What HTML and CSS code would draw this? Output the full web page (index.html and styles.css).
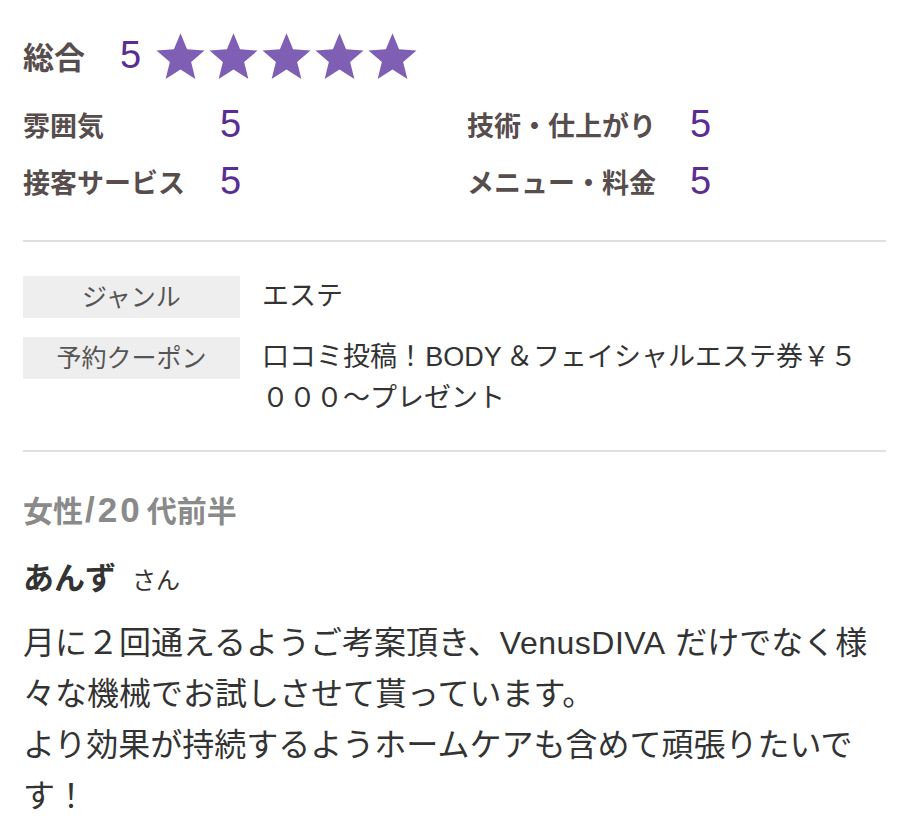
FILE: index.html
```html
<!DOCTYPE html>
<html lang="ja">
<head>
<meta charset="utf-8">
<link rel="stylesheet" href="styles.css">
</head>
<body>
<div class="page">
  <section class="rating">
    <div class="total">
      <span class="total-label">総合</span>
      <span class="total-num">5</span>
      <span class="stars">
        <svg class="star" viewBox="0 0 24 24"><path d="M12 1.5l3.1 7.6 8.2.6-6.3 5.3 2 8-7-4.4-7 4.4 2-8L.7 9.7l8.2-.6z"/></svg>
        <svg class="star" viewBox="0 0 24 24"><path d="M12 1.5l3.1 7.6 8.2.6-6.3 5.3 2 8-7-4.4-7 4.4 2-8L.7 9.7l8.2-.6z"/></svg>
        <svg class="star" viewBox="0 0 24 24"><path d="M12 1.5l3.1 7.6 8.2.6-6.3 5.3 2 8-7-4.4-7 4.4 2-8L.7 9.7l8.2-.6z"/></svg>
        <svg class="star" viewBox="0 0 24 24"><path d="M12 1.5l3.1 7.6 8.2.6-6.3 5.3 2 8-7-4.4-7 4.4 2-8L.7 9.7l8.2-.6z"/></svg>
        <svg class="star" viewBox="0 0 24 24"><path d="M12 1.5l3.1 7.6 8.2.6-6.3 5.3 2 8-7-4.4-7 4.4 2-8L.7 9.7l8.2-.6z"/></svg>
      </span>
    </div>
    <div class="sub-grid">
      <div class="sub"><span class="sub-label l1">雰囲気</span><span class="sub-num">5</span></div>
      <div class="sub"><span class="sub-label l2">技術・仕上がり</span><span class="sub-num">5</span></div>
      <div class="sub"><span class="sub-label l1">接客サービス</span><span class="sub-num">5</span></div>
      <div class="sub"><span class="sub-label l2">メニュー・料金</span><span class="sub-num">5</span></div>
    </div>
  </section>
  <hr class="divider">
  <section class="info">
    <div class="info-row">
      <div class="info-label">ジャンル</div>
      <div class="info-value">エステ</div>
    </div>
    <div class="info-row">
      <div class="info-label">予約クーポン</div>
      <div class="info-value">口コミ投稿！<span class="latin">BODY</span>＆フェイシャルエステ券￥５０００～プレゼント</div>
    </div>
  </section>
  <hr class="divider">
  <section class="review">
    <div class="reviewer-meta">女性<span class="meta-num">/20</span>代前半</div>
    <div class="reviewer-name"><span class="name">あんず</span><span class="san">さん</span></div>
    <p class="review-text">月に２回通えるようご考案頂き、<span class="latin wide">VenusDIVA</span>だけでなく様々な機械でお試しさせて貰っています。<br>より効果が持続するようホームケアも含めて頑張りたいです！</p>
  </section>
</div>
</body>
</html>
```
FILE: styles.css
```css
html, body {
  margin: 0;
  padding: 0;
  background: #fff;
}
body {
  font-family: "Liberation Sans", "Noto Sans CJK JP", sans-serif;
  color: #333;
}
.page {
  padding: 0 14px 0 23px;
}
.rating {
  padding-top: 30px;
  padding-bottom: 38px;
}
.total {
  display: flex;
  align-items: center;
  height: 50px;
}
.total-label {
  font-size: 31px;
  font-weight: bold;
  color: #574d4d;
  width: 97px;
}
.total-num {
  font-size: 38px;
  color: #5b2c92;
  margin-right: 14px;
}
.stars {
  display: flex;
  gap: 2px;
}
.star {
  width: 51px;
  height: 51px;
  fill: #7f5fb3;
}
.sub-grid {
  display: grid;
  grid-template-columns: 444px 1fr;
  row-gap: 15px;
  margin-top: 23px;
}
.sub {
  display: flex;
  align-items: center;
  height: 42px;
}
.sub-label {
  font-size: 27px;
  font-weight: bold;
  color: #574d4d;
}
.sub-label.l1 { width: 197px; }
.sub-label.l2 { width: 223px; }
.sub-num {
  font-size: 38px;
  color: #5b2c92;
  line-height: 42px;
}
.divider {
  border: 0;
  height: 2px;
  background: #e0e0e0;
  margin: 0;
}
.info {
  padding: 34px 0 31px;
  display: flex;
  flex-direction: column;
  gap: 19px;
}
.info-row {
  display: flex;
  align-items: flex-start;
}
.info-label {
  flex: 0 0 217px;
  height: 42px;
  background: #eeeeee;
  color: #555;
  font-size: 25px;
  line-height: 42px;
  text-align: center;
}
.info-value {
  flex: 1;
  margin-left: 22px;
  margin-right: 21px;
  font-size: 27px;
  line-height: 41px;
  color: #333;
  word-break: break-all;
}
.latin {
  margin: 0 0.15em 0 0.05em;
}
.latin.wide {
  letter-spacing: 0.5px;
  margin: 0 0.3em 0 0;
}
.review {
  padding-top: 38px;
}
.reviewer-meta {
  font-size: 30px;
  font-weight: bold;
  color: #8a8a8a;
  line-height: 40px;
}
.meta-num {
  font-size: 35px;
  letter-spacing: 3px;
  margin: 0 4px 0 2px;
}
.reviewer-name {
  margin-top: 27px;
  display: flex;
  align-items: baseline;
  line-height: 40px;
}
.name {
  font-size: 31px;
  font-weight: bold;
  color: #333;
}
.san {
  font-size: 24px;
  margin-left: 16px;
  color: #333;
}
.review-text {
  margin: 17px 12px 0 0;
  font-size: 32px;
  line-height: 51px;
  color: #333;
  word-break: break-all;
  line-break: loose;
}
```
